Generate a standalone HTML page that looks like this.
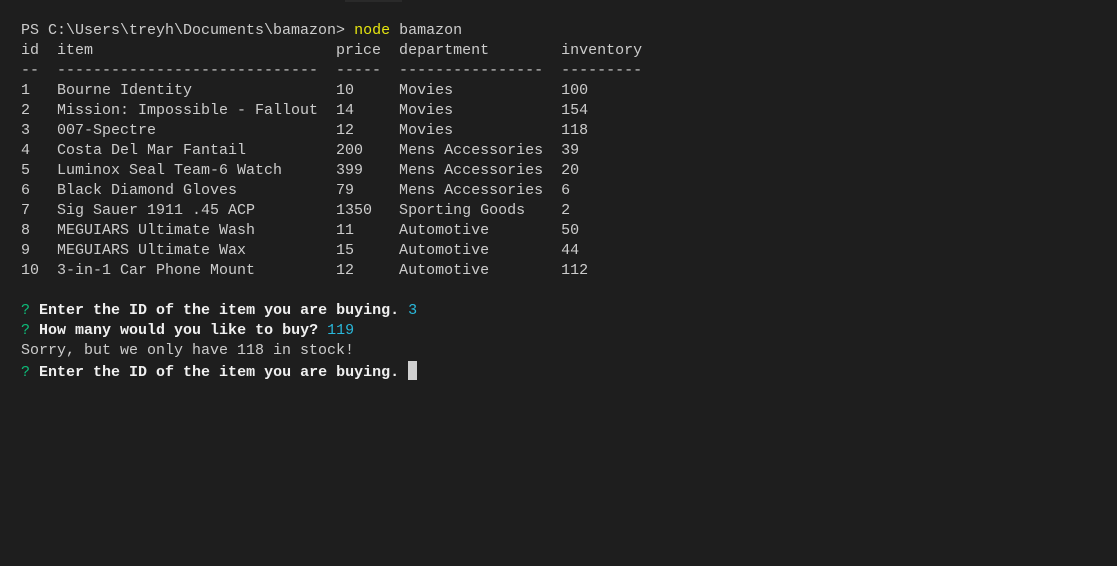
<!DOCTYPE html>
<html><head><meta charset="utf-8"><style>
html,body{margin:0;padding:0;background:#1e1e1e;width:1117px;height:566px;overflow:hidden}
pre{position:absolute;left:21px;top:21px;margin:0;font-family:"Liberation Mono","DejaVu Sans Mono",monospace;font-size:15px;line-height:20px;color:#cccccc;letter-spacing:0}
.y{color:#e5e510}.g{color:#0dbc79}.b{color:#29b8db}.w{color:#f0f0f0;font-weight:bold}
.cur{display:inline-block;width:9px;height:19px;background:#d0d0d0;vertical-align:-4px}
.bar{position:absolute;left:345px;top:0;width:57px;height:2px;background:#2a2a2a}
</style></head><body>
<div class="bar"></div>
<pre>PS C:\Users\treyh\Documents\bamazon> <span class="y">node</span> bamazon
id  item                           price  department        inventory
--  -----------------------------  -----  ----------------  ---------
1   Bourne Identity                10     Movies            100
2   Mission: Impossible - Fallout  14     Movies            154
3   007-Spectre                    12     Movies            118
4   Costa Del Mar Fantail          200    Mens Accessories  39
5   Luminox Seal Team-6 Watch      399    Mens Accessories  20
6   Black Diamond Gloves           79     Mens Accessories  6
7   Sig Sauer 1911 .45 ACP         1350   Sporting Goods    2
8   MEGUIARS Ultimate Wash         11     Automotive        50
9   MEGUIARS Ultimate Wax          15     Automotive        44
10  3-in-1 Car Phone Mount         12     Automotive        112

<span class="g">?</span> <span class="w">Enter the ID of the item you are buying.</span> <span class="b">3</span>
<span class="g">?</span> <span class="w">How many would you like to buy?</span> <span class="b">119</span>
Sorry, but we only have 118 in stock!
<span class="g">?</span> <span class="w">Enter the ID of the item you are buying.</span> <span class="cur"></span></pre>
</body></html>
